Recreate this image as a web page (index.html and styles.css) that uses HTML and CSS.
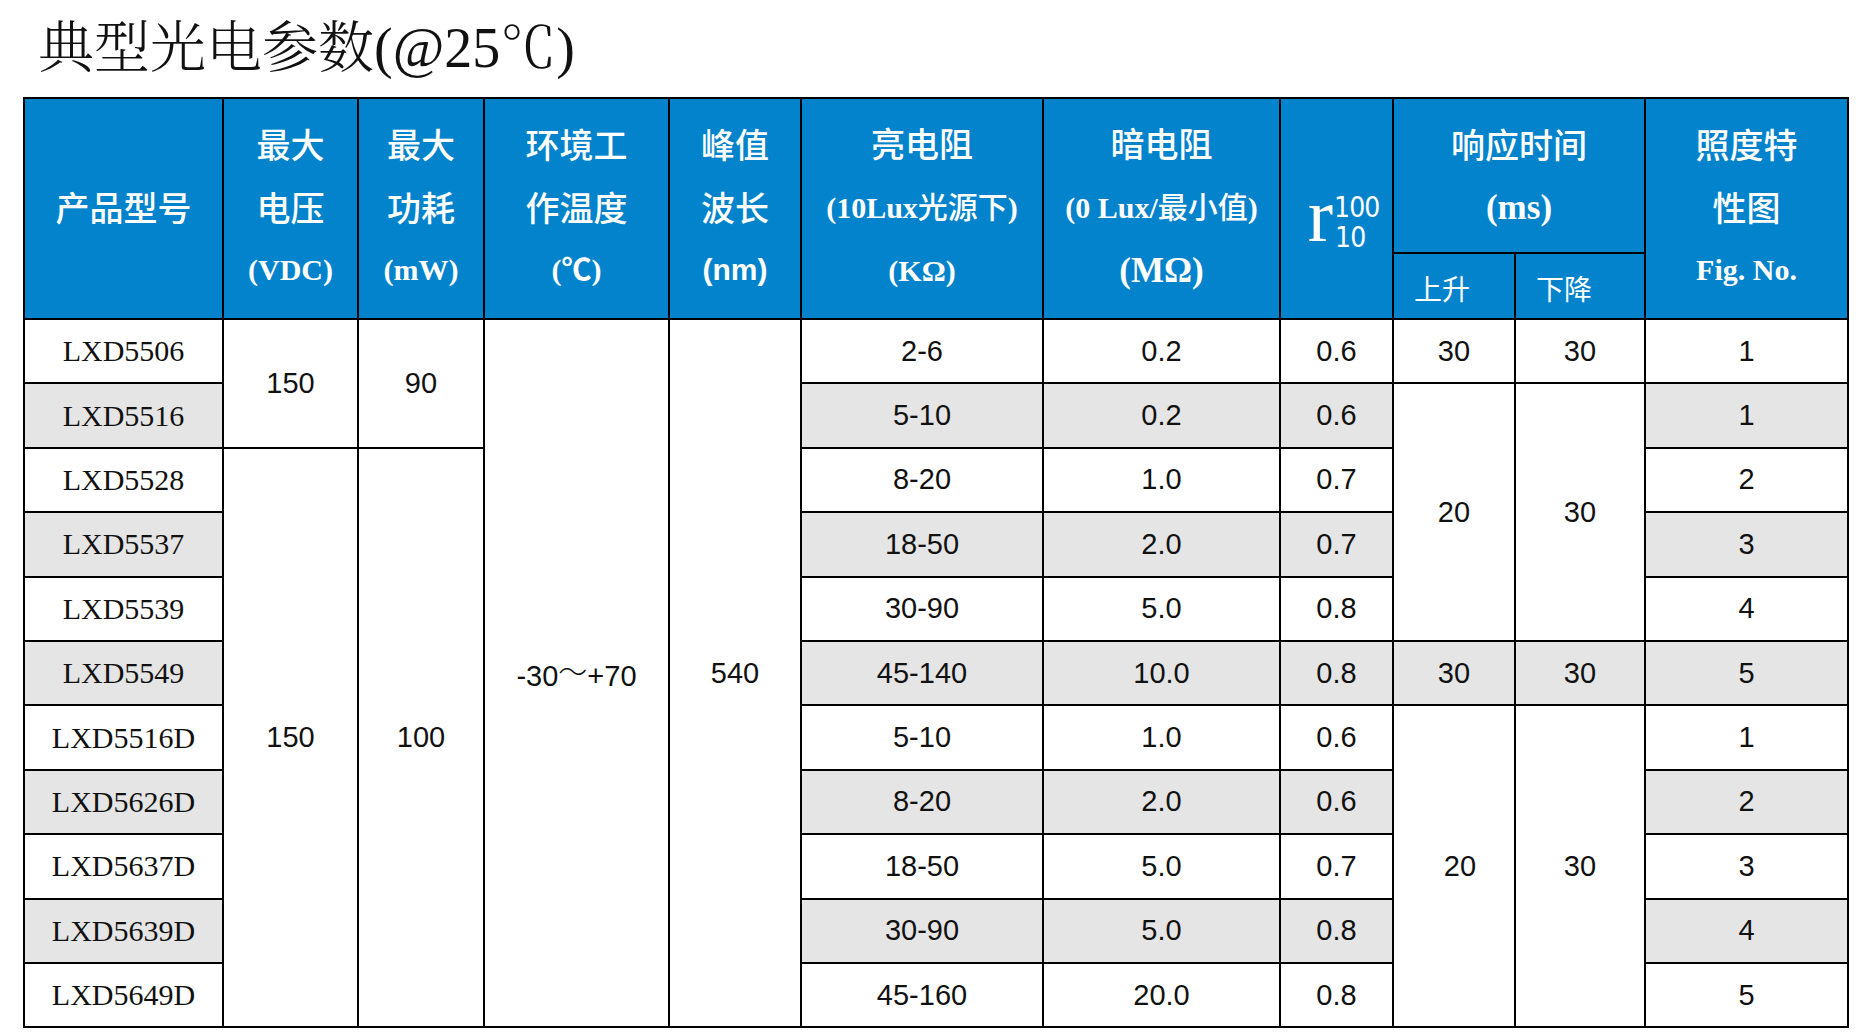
FILE: index.html
```html
<!DOCTYPE html>
<html lang="zh-CN">
<head>
<meta charset="utf-8">
<title>典型光电参数</title>
<link rel="stylesheet" href="styles.css">
</head>
<body>
<div class="page">
  <h1 class="title">典型光电参数(@25℃)</h1>
  <table class="spec">
    <colgroup>
      <col class="c1"><col class="c2"><col class="c3"><col class="c4"><col class="c5"><col class="c6">
      <col class="c7"><col class="c8"><col class="c9"><col class="c10"><col class="c11">
    </colgroup>
    <thead>
      <tr class="h1">
        <th rowspan="2"><span class="ln cj">产品型号</span></th>
        <th rowspan="2"><span class="ln cj">最大</span><span class="ln cj">电压</span><span class="ln sm">(VDC)</span></th>
        <th rowspan="2"><span class="ln cj">最大</span><span class="ln cj">功耗</span><span class="ln sm">(mW)</span></th>
        <th rowspan="2"><span class="ln cj">环境工</span><span class="ln cj">作温度</span><span class="ln sm">(℃)</span></th>
        <th rowspan="2"><span class="ln cj">峰值</span><span class="ln cj">波长</span><span class="ln sm sans">(nm)</span></th>
        <th rowspan="2"><span class="ln cj">亮电阻</span><span class="ln sm">(10Lux<span class="cj">光源下</span>)</span><span class="ln sm">(KΩ)</span></th>
        <th rowspan="2"><span class="ln cj">暗电阻</span><span class="ln sm">(0 Lux/<span class="cj">最小值</span>)</span><span class="ln lg">(MΩ)</span></th>
        <th rowspan="2" class="rcell"><span class="rsym"><span class="rr">r</span><span class="rsc"><span class="rsup">100</span><span class="rsub">10</span></span></span></th>
        <th colspan="2" class="resp"><span class="ln cj">响应时间</span><span class="ln lg">(ms)</span></th>
        <th rowspan="2"><span class="ln cj">照度特</span><span class="ln cj">性图</span><span class="ln sm">Fig. No.</span></th>
      </tr>
      <tr class="h2">
        <th class="sub">上升</th>
        <th class="sub">下降</th>
      </tr>
    </thead>
    <tbody>
      <tr>
        <td class="pn">LXD5506</td>
        <td rowspan="2">150</td>
        <td rowspan="2">90</td>
        <td rowspan="11">-30<span class="wave">～</span>+70</td>
        <td rowspan="11">540</td>
        <td>2-6</td><td>0.2</td><td>0.6</td><td>30</td><td>30</td><td>1</td>
      </tr>
      <tr class="g">
        <td class="pn">LXD5516</td>
        <td>5-10</td><td>0.2</td><td>0.6</td>
        <td rowspan="4" class="w">20</td>
        <td rowspan="4" class="w">30</td>
        <td>1</td>
      </tr>
      <tr>
        <td class="pn">LXD5528</td>
        <td rowspan="9" class="w">150</td>
        <td rowspan="9" class="w">100</td>
        <td>8-20</td><td>1.0</td><td>0.7</td><td>2</td>
      </tr>
      <tr class="g">
        <td class="pn">LXD5537</td>
        <td>18-50</td><td>2.0</td><td>0.7</td><td>3</td>
      </tr>
      <tr>
        <td class="pn">LXD5539</td>
        <td>30-90</td><td>5.0</td><td>0.8</td><td>4</td>
      </tr>
      <tr class="g">
        <td class="pn">LXD5549</td>
        <td>45-140</td><td>10.0</td><td>0.8</td><td>30</td><td>30</td><td>5</td>
      </tr>
      <tr>
        <td class="pn">LXD5516D</td>
        <td>5-10</td><td>1.0</td><td>0.6</td>
        <td rowspan="5" class="w r20">20</td>
        <td rowspan="5" class="w">30</td>
        <td>1</td>
      </tr>
      <tr class="g">
        <td class="pn">LXD5626D</td>
        <td>8-20</td><td>2.0</td><td>0.6</td><td>2</td>
      </tr>
      <tr>
        <td class="pn">LXD5637D</td>
        <td>18-50</td><td>5.0</td><td>0.7</td><td>3</td>
      </tr>
      <tr class="g">
        <td class="pn">LXD5639D</td>
        <td>30-90</td><td>5.0</td><td>0.8</td><td>4</td>
      </tr>
      <tr>
        <td class="pn">LXD5649D</td>
        <td>45-160</td><td>20.0</td><td>0.8</td><td>5</td>
      </tr>
    </tbody>
  </table>
</div>
</body>
</html>
```

FILE: styles.css
```css
html, body {
  margin: 0;
  padding: 0;
  background: #ffffff;
}

.page {
  width: 1859px;
  height: 1033px;
  overflow: hidden;
}

.title {
  margin: 0;
  height: 97px;
  padding-left: 38px;
  font-family: "Liberation Serif", "Noto Serif CJK SC", "Noto Sans CJK SC", serif;
  font-weight: 300;
  font-size: 56px;
  line-height: 96px;
  color: #111;
  white-space: nowrap;
}

.spec {
  margin-left: 23px;
  width: 1824px;
  table-layout: fixed;
  border-collapse: collapse;
}

.c1 { width: 199px; }
.c2 { width: 135px; }
.c3 { width: 126px; }
.c4 { width: 185px; }
.c5 { width: 132px; }
.c6 { width: 242px; }
.c7 { width: 237px; }
.c8 { width: 113px; }
.c9 { width: 122px; }
.c10 { width: 130px; }
.c11 { width: 203px; }

.spec th,
.spec td {
  border: 2px solid #000;
  padding: 0;
  text-align: center;
  vertical-align: middle;
}

.spec th {
  background: #0383cc;
  color: #ffffff;
  font-family: "Liberation Serif", "Noto Sans CJK SC", serif;
  font-weight: 700;
  font-size: 34px;
}

.h1 { height: 155px; }
.h2 { height: 66px; }

.ln {
  display: block;
  line-height: 63px;
  white-space: nowrap;
}

.cj {
  font-family: "Noto Sans CJK SC", sans-serif;
  font-weight: 500;
}

.ln.sm { font-size: 30px; }
.ln.lg { font-size: 35px; }
.ln.sans { font-family: "Liberation Sans", "Noto Sans CJK SC", sans-serif; }

.spec th:not(.resp):not(.sub):not(.rcell) { padding-bottom: 4px; }

.resp .ln { line-height: 64px; }

.spec th.sub {
  font-family: "Noto Sans CJK SC", sans-serif;
  font-weight: 400;
  font-size: 28px;
  text-align: left;
  padding-left: 20px;
  padding-top: 4px;
}

.spec th.rcell {
  padding-left: 14px;
  padding-top: 28px;
}

.rsym {
  display: inline-flex;
  align-items: center;
  gap: 1px;
}

.rr {
  font-family: "Liberation Serif", serif;
  font-weight: 400;
  font-size: 76px;
  line-height: 1;
  margin-top: -16px;
}

.rsc {
  display: inline-flex;
  flex-direction: column;
  align-items: flex-start;
  font-family: "Liberation Sans Narrow", "DejaVu Sans Condensed", "Liberation Sans", sans-serif;
  font-weight: 400;
  font-size: 28px;
  line-height: 30px;
  letter-spacing: -1px;
}

.rsub { padding-left: 1px; }

.spec tbody tr { height: 64.4px; }

.spec td {
  font-family: "Liberation Sans", "Noto Sans CJK SC", sans-serif;
  font-size: 29px;
  color: #111;
  background: #ffffff;
}

.spec td.pn {
  font-family: "Liberation Serif", serif;
  font-size: 30px;
}

.spec tr.g td { background: #e5e5e5; }
.spec tr.g td.w { background: #ffffff; }

.spec td.r20 { padding-left: 12px; }

.wave {
  font-family: "Noto Sans CJK SC", sans-serif;
  font-weight: 300;
  position: relative;
  top: -3px;
}
```
